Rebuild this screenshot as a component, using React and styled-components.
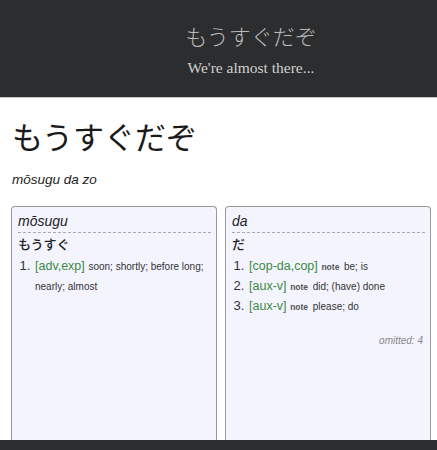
import React from 'react'
import styled, { createGlobalStyle } from 'styled-components'

const dark = '#2c2d2f'
const green = '#3c8a3c'

const GlobalStyle = createGlobalStyle`
  html, body { margin:0; padding:0; background:#fff; }
  body { font-family:"Liberation Sans", "Noto Sans CJK JP", sans-serif; color:#222; }
`

const Page = styled.div`
  display:flex;
  flex-direction:column;
  min-height:450px;
  overflow:hidden;
`

const Header = styled.header`
  height:97px;
  background:${dark};
  border-bottom:1px solid #c8c8c8;
  display:flex;
  flex-direction:column;
  align-items:center;
  justify-content:center;
  padding-left:65px;
  box-sizing:content-box;
`

const HeaderTitle = styled.div`
  font-family:"DejaVu Serif", "Noto Sans CJK JP", serif;
  font-weight:300;
  font-size:22px;
  line-height:28px;
  color:#b9b9b9;
  margin-top:4px;
`

const HeaderSub = styled.div`
  font-family:"Liberation Serif", serif;
  font-size:15.5px;
  line-height:20px;
  color:#d0d0d0;
  margin-top:6px;
`

const Main = styled.main`
  flex:1;
  padding:0 6px 0 11px;
  display:flex;
  flex-direction:column;
`

const Title = styled.h1`
  font-family:"Noto Sans CJK JP", sans-serif;
  font-weight:400;
  font-size:31px;
  line-height:40px;
  margin:18px 0 0 1px;
  color:#1a1a1a;
`

const Romaji = styled.div`
  font-style:italic;
  font-size:13.5px;
  margin:16px 0 0 1px;
  color:#222;
`

const Cards = styled.div`
  flex:1;
  display:flex;
  gap:8px;
  margin-top:19px;
`

const Card = styled.section`
  flex:1;
  box-sizing:border-box;
  background:#f4f4ff;
  border:1px solid #9a9a9a;
  border-bottom:none;
  border-radius:4px 4px 0 0;
  padding:5px 3px 0 6px;
  display:flex;
  flex-direction:column;
`

const Reading = styled.div`
  font-style:italic;
  font-size:14px;
  line-height:18px;
  padding-bottom:2px;
  margin-right:2px;
  border-bottom:1px dashed #aaa;
`

const Word = styled.div`
  font-family:"Noto Sans CJK JP", sans-serif;
  font-weight:500;
  font-size:13px;
  line-height:20px;
  margin-top:1px;
`

const Senses = styled.ol`
  margin:2px 0 0;
  padding-left:16px;
  font-size:13px;
  line-height:19px;
  color:#333;
`

const Sense = styled.li`
  padding-left:1px;
`

const Tag = styled.span`
  font-size:12.5px;
  color:${green};
`

const Gloss = styled.span`
  font-size:10px;
  line-height:1;
  color:#333;
`

const Note = styled.span`
  font-size:8.5px;
  line-height:1;
  font-weight:bold;
  color:#555;
  margin-right:1px;
`

const Omitted = styled.div`
  font-style:italic;
  font-size:10px;
  color:#888;
  text-align:right;
  margin-top:19px;
  padding-right:4px;
`

const Footer = styled.footer`
  height:10px;
  background:${dark};
`

const entries = [
  {
    reading: 'mōsugu',
    word: 'もうすぐ',
    senses: [{ tag: '[adv,exp]', gloss: 'soon; shortly; before long; nearly; almost' }],
  },
  {
    reading: 'da',
    word: 'だ',
    senses: [
      { tag: '[cop-da,cop]', note: true, gloss: 'be; is' },
      { tag: '[aux-v]', note: true, gloss: 'did; (have) done' },
      { tag: '[aux-v]', note: true, gloss: 'please; do' },
    ],
    omitted: 4,
  },
]

const App = () => {
  return (
    <Page>
      <GlobalStyle />
      <Header>
        <HeaderTitle>もうすぐだぞ</HeaderTitle>
        <HeaderSub>We're almost there...</HeaderSub>
      </Header>
      <Main>
        <Title>もうすぐだぞ</Title>
        <Romaji>mōsugu da zo</Romaji>
        <Cards>
          {entries.map((e) => (
            <Card key={e.reading}>
              <Reading>{e.reading}</Reading>
              <Word>{e.word}</Word>
              <Senses>
                {e.senses.map((s, i) => (
                  <Sense key={i}>
                    <Tag>{s.tag}</Tag> {s.note && <Note>note</Note>} <Gloss>{s.gloss}</Gloss>
                  </Sense>
                ))}
              </Senses>
              {e.omitted && <Omitted>omitted: {e.omitted}</Omitted>}
            </Card>
          ))}
        </Cards>
      </Main>
      <Footer />
    </Page>
  )
}

export default App
